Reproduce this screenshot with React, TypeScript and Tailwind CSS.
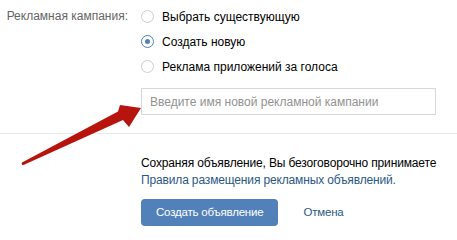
import { useState } from "react";

const options = [
  "Выбрать существующую",
  "Создать новую",
  "Реклама приложений за голоса",
];

function Radio({ checked }: { checked: boolean }) {
  return (
    <span
      className={`flex h-[13px] w-[13px] shrink-0 items-center justify-center rounded-full border ${
        checked ? "border-[#5181b8]" : "border-[#c5ced8]"
      } bg-white`}
    >
      {checked && <span className="h-[5px] w-[5px] rounded-full bg-[#5181b8]" />}
    </span>
  );
}

export default function App() {
  const [selected, setSelected] = useState(1);

  return (
    <div
      className="relative h-[234px] w-[457px] overflow-hidden bg-white text-[12px] text-black"
      style={{ fontFamily: '"Liberation Sans", Arial, sans-serif' }}
    >
      {/* Campaign section */}
      <div className="flex pt-[4px]">
        <div className="w-[128px] shrink-0 whitespace-nowrap text-right leading-[25px] text-[#656565]">
          Рекламная кампания:
        </div>
        <div className="ml-[13px] flex flex-col">
          {options.map((label, i) => (
            <button
              key={label}
              type="button"
              onClick={() => setSelected(i)}
              className="flex h-[25px] items-center gap-[8px] text-left text-[12px]"
            >
              <Radio checked={selected === i} />
              <span className="whitespace-nowrap">{label}</span>
            </button>
          ))}
          <input
            type="text"
            placeholder="Введите имя новой рекламной кампании"
            className="mt-[9px] h-[27px] w-[295px] border border-[#d3d9de] bg-white px-[8px] text-[12px] text-black outline-none placeholder:text-[#929292]"
          />
        </div>
      </div>

      {/* Divider */}
      <div className="mt-[18px] h-px w-full bg-[#e7e8ec]" />

      {/* Footer */}
      <div className="pl-[141px] pt-[21px] tracking-[-0.15px]">
        <p className="whitespace-nowrap leading-[17px]">
          Сохраняя объявление, Вы безоговорочно принимаете
        </p>
        <a href="#" className="block whitespace-nowrap leading-[17px] text-[#2a5885]">
          Правила размещения рекламных объявлений.
        </a>
        <div className="mt-[10px] flex items-center gap-[25px]">
          <button
            type="button"
            className="h-[27px] rounded-[4px] bg-[#5181b8] px-[15px] text-[11.5px] tracking-[-0.2px] text-white"
          >
            Создать объявление
          </button>
          <button type="button" className="text-[11.5px] tracking-[-0.2px] text-[#2a5885]">
            Отмена
          </button>
        </div>
      </div>

      {/* Red arrow overlay */}
      <svg
        className="pointer-events-none absolute left-0 top-0"
        width="457"
        height="234"
        viewBox="0 0 457 234"
      >
        <polygon
          fill="#b8140e"
          points="22,162.5 118,111.5 120,105 141,108 129,127 123,120 24,164.8"
        />
        <circle cx="23" cy="163.7" r="1.3" fill="#b8140e" />
      </svg>
    </div>
  );
}
